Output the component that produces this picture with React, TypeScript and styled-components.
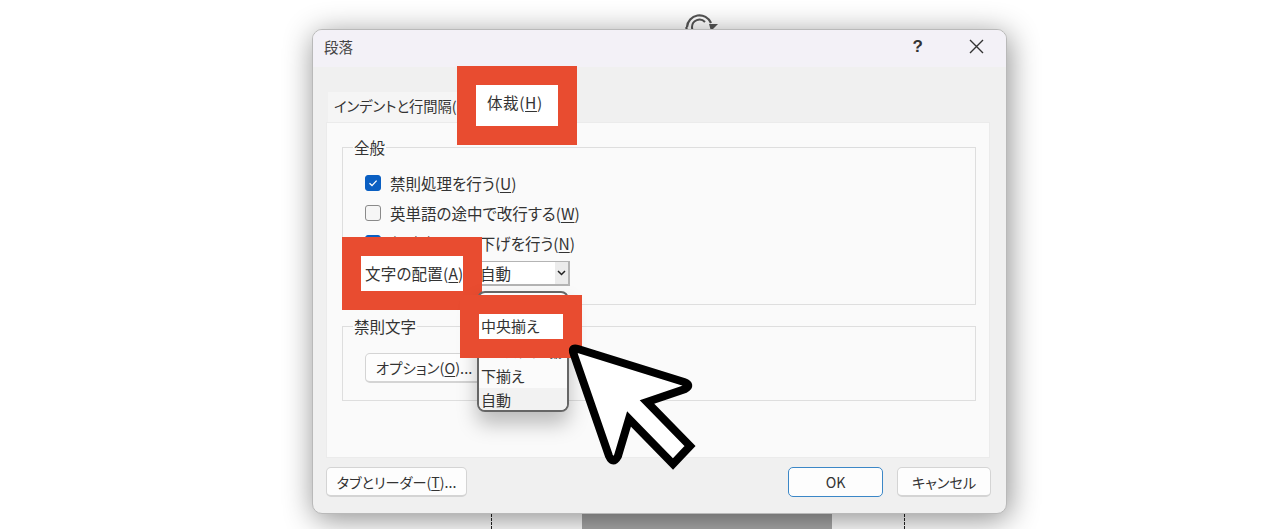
import React from "react";
import styled, { createGlobalStyle } from "styled-components";

const GlobalStyle = createGlobalStyle`
	html, body {
		margin: 0;
		padding: 0;
		background: #ffffff;
	}
	body {
		font-family: "Noto Sans CJK JP", "Noto Sans", sans-serif;
		font-feature-settings: "palt";
		font-size: 15.5px;
		color: #333333;
	}
`;

const Page = styled.div`
	position: relative;
	width: 1280px;
	height: 529px;
	overflow: hidden;
	display: flex;
	flex-direction: column;
`;

const TopStrip = styled.div`
	height: 29px;
	padding: 12px 0 0 684px;
	box-sizing: border-box;
	overflow: hidden;
`;

const Dialog = styled.div`
	position: relative;
	z-index: 1;
	width: 695px;
	height: 485px;
	margin-left: 312px;
	box-sizing: border-box;
	flex: none;
	display: flex;
	flex-direction: column;
	background: #f0f0f0;
	border: 1px solid #b9b9b9;
	border-radius: 10px;
	box-shadow: 2px 5px 30px rgba(0, 0, 0, 0.45);
`;

const TitleBar = styled.div`
	height: 37px;
	flex: none;
	box-sizing: border-box;
	display: flex;
	align-items: center;
	padding: 0 22px 4px 11px;
	background: #f3f1f7;
	border-radius: 9px 9px 0 0;
`;

const Title = styled.span`
	font-size: 14.5px;
	color: #444444;
	flex: 1;
`;

const HelpMark = styled.span`
	font-family: "Liberation Sans", sans-serif;
	font-weight: 700;
	font-size: 17px;
	color: #333333;
	margin-right: 46px;
`;

const Tabs = styled.div`
	height: 30px;
	margin: 25px 0 0 15px;
	display: flex;
	flex: none;
`;

const Tab = styled.div`
	width: 148px;
	height: 30px;
	box-sizing: border-box;
	padding: 0 0 0 6px;
	background: #f5f5f5;
	line-height: 27px;
	font-size: 14.3px;
	white-space: nowrap;
	overflow: hidden;
`;

const ActiveTab = styled.div`
	position: relative;
	z-index: 5;
	width: 82px;
	height: 41px;
	margin-top: -7px;
	box-sizing: border-box;
	padding: 4px 0 0 11px;
	line-height: 26px;
	letter-spacing: 0.6px;
	background: #ffffff;
	outline: 19px solid #e84c30;
	white-space: nowrap;
`;

const Panel = styled.div`
	height: 336px;
	margin: 0 16px 0 13px;
	flex: none;
	box-sizing: border-box;
	padding: 13px 13px 0 15px;
	background: #fafafa;
	border: 1px solid #ebebeb;
`;

const Group = styled.fieldset<{ $height: number; $gap: number; $top?: number }>`
	height: ${(p) => p.$height}px;
	margin: 0 0 ${(p) => p.$gap}px;
	padding: ${(p) => p.$top ?? 0}px 0 0 22px;
	box-sizing: border-box;
	border: 1px solid #dedede;
	min-width: 0;
`;

const GroupTitle = styled.legend`
	margin-left: -12px;
	padding: 0 1px;
	line-height: 22px;
`;

const CheckRow = styled.div`
	height: 30px;
	display: flex;
	align-items: center;
	gap: 9px;
	white-space: nowrap;
`;

const CheckBox = styled.span<{ $checked?: boolean }>`
	width: 16px;
	height: 16px;
	box-sizing: border-box;
	flex: none;
	display: flex;
	align-items: center;
	justify-content: center;
	border-radius: 3px;
	border: 1px solid ${(p) => (p.$checked ? "#0a5fc2" : "#8a8a8a")};
	background: ${(p) => (p.$checked ? "#0a5fc2" : "#f6f6f6")};
`;

const Key = styled.span`
	text-decoration: underline;
	text-underline-offset: 2px;
	text-decoration-thickness: 1px;
`;

const AlignRow = styled.div`
	height: 30px;
	display: flex;
	align-items: center;
	gap: 16px;
	margin-left: -4px;
`;

const AlignLabel = styled.div`
	position: relative;
	z-index: 3;
	width: 102px;
	height: 35px;
	flex: none;
	box-sizing: border-box;
	padding-left: 4px;
	line-height: 35px;
	letter-spacing: 0.2px;
	background: #ffffff;
	outline: 19px solid #e84c30;
	white-space: nowrap;
`;

const Select = styled.div`
	position: relative;
	width: 91px;
	height: 25px;
	box-sizing: border-box;
	display: flex;
	background: #ffffff;
	border: 1px solid #b4b4b4;
	border-width: 1px 2px 2px 1px;
`;

const SelectValue = styled.span`
	flex: 1;
	line-height: 22px;
`;

const SelectArrow = styled.span`
	width: 13px;
	display: flex;
	align-items: center;
	justify-content: center;
	background: #ececec;
`;

const DropDown = styled.div`
	position: absolute;
	z-index: 4;
	top: 29px;
	left: -3px;
	width: 92px;
	height: 121px;
	box-sizing: border-box;
	background: #fbfbfb;
	border: 2px solid #666666;
	border-radius: 8px;
	box-shadow: 0 12px 20px rgba(0, 0, 0, 0.25);
`;

const Option = styled.div<{ $dim?: boolean }>`
	height: 24.5px;
	box-sizing: border-box;
	line-height: 24px;
	padding-left: 2px;
	background: ${(p) => (p.$dim ? "#f2f2f2" : "transparent")};
	white-space: nowrap;
	font-size: 15px;
	&:first-child {
		margin-top: -3px;
	}
	&:last-child {
		height: 21.5px;
		border-radius: 0 0 6px 6px;
	}
`;

const PickedOption = styled(Option)`
	position: relative;
	z-index: 1;
	width: 84px;
	height: 25px;
	background: #ffffff;
	outline: 19px solid #e84c30;
`;

const LongOption = styled(Option)`
	font-size: 12.5px;
	line-height: 28px;
`;

const Button = styled.button<{ $width: number; $primary?: boolean }>`
	width: ${(p) => p.$width}px;
	height: 30px;
	padding: 0;
	flex: none;
	font-family: inherit;
	font-feature-settings: inherit;
	font-size: 14.2px;
	color: #333333;
	background: #fdfdfd;
	border: 1px solid ${(p) => (p.$primary ? "#3b87c7" : "#d4d4d4")};
	border-width: ${(p) => (p.$primary ? "1.5px" : "1px 1px 2px 1px")};
	border-radius: 5px;
	white-space: nowrap;
`;

const Footer = styled.div`
	display: flex;
	margin: 9px 0 0 13px;
	padding-right: 15px;
	gap: 14px;
`;

const FooterGap = styled.div`
	flex: 1;
`;

const OptionButton = styled(Button)`
	margin-top: 16px;
	display: block;
	font-size: 14.5px;
`;

const BottomStrip = styled.div`
	height: 15px;
	flex: none;
	display: flex;
	background: #ffffff;
`;

const DashLine = styled.div<{ $left: number }>`
	margin-left: ${(p) => p.$left}px;
	width: 0;
	border-left: 1px dashed #222222;
`;

const DarkBlock = styled.div`
	margin-left: 90px;
	width: 250px;
	background: #a8a8a8;
`;

const Pointer = styled.svg`
	position: absolute;
	z-index: 6;
	left: 560px;
	top: 335px;
`;

function Check() {
	return (
		<svg width="12" height="12" viewBox="0 0 12 12" fill="none">
			<path d="M2.5 6.3 L5 8.6 L9.6 3.6" stroke="#ffffff" strokeWidth="1.3" />
		</svg>
	);
}

function RotateMark() {
	return (
		<svg width="36" height="34" viewBox="0 0 36 34" fill="none" stroke="#555555">
			<path d="M3 15 A12.5 12.5 0 0 1 27 11" strokeWidth="2.2" />
			<path d="M2.5 15 A12.5 12.5 0 0 0 20 27" strokeWidth="2.2" />
			<path d="M8 15 A7.5 7.5 0 0 1 21 10" strokeWidth="2" />
			<path d="M8 15 A7.5 7.5 0 0 0 20 21" strokeWidth="2" />
			<path d="M25 12 L34 12 L27 19 Z" fill="#555555" stroke="none" />
		</svg>
	);
}

export default function App() {
	return (
		<Page>
			<GlobalStyle />
			<TopStrip>
				<RotateMark />
			</TopStrip>
			<Dialog>
				<TitleBar>
					<Title>段落</Title>
					<HelpMark>?</HelpMark>
					<svg width="15" height="15" viewBox="0 0 15 15" stroke="#333333" strokeWidth="1.4" fill="none">
						<path d="M1 1 L14 14 M14 1 L1 14" />
					</svg>
				</TitleBar>
				<Tabs>
					<Tab>インデントと行間隔(I)</Tab>
					<ActiveTab>
						体裁(<Key>H</Key>)
					</ActiveTab>
				</Tabs>
				<Panel>
					<Group $height={169} $gap={10} $top={10}>
						<GroupTitle>全般</GroupTitle>
						<CheckRow>
							<CheckBox $checked>
								<Check />
							</CheckBox>
							<span>
								禁則処理を行う(<Key>U</Key>)
							</span>
						</CheckRow>
						<CheckRow>
							<CheckBox />
							<span>
								英単語の途中で改行する(<Key>W</Key>)
							</span>
						</CheckRow>
						<CheckRow>
							<CheckBox $checked>
								<Check />
							</CheckBox>
							<span>
								句読点のぶら下げを行う(<Key>N</Key>)
							</span>
						</CheckRow>
						<AlignRow>
							<AlignLabel>
								文字の配置(<Key>A</Key>)
							</AlignLabel>
							<Select>
								<SelectValue>自動</SelectValue>
								<SelectArrow>
									<svg width="9" height="6" viewBox="0 0 9 6" fill="none" stroke="#222222" strokeWidth="1.5">
										<path d="M1 1 L4.5 4.5 L8 1" />
									</svg>
								</SelectArrow>
								<DropDown>
									<Option>上揃え</Option>
									<PickedOption>中央揃え</PickedOption>
									<LongOption>ベースライン揃え</LongOption>
									<Option>下揃え</Option>
									<Option $dim>自動</Option>
								</DropDown>
							</Select>
						</AlignRow>
					</Group>
					<Group $height={86} $gap={0}>
						<GroupTitle>禁則文字</GroupTitle>
						<OptionButton $width={118}>
							オプション(<Key>O</Key>)...
						</OptionButton>
					</Group>
				</Panel>
				<Footer>
					<Button $width={141}>
						タブとリーダー(<Key>T</Key>)...
					</Button>
					<FooterGap />
					<Button $width={95} $primary>
						OK
					</Button>
					<Button $width={94}>キャンセル</Button>
				</Footer>
			</Dialog>
			<BottomStrip>
				<DashLine $left={491} />
				<DarkBlock />
				<DashLine $left={72} />
			</BottomStrip>
			<Pointer width="140" height="140" viewBox="560 335 140 140">
				<path
					d="M573 352 Q572 347 578 349 L684 382 Q692 385 685 389 L647 402 L690 446 L673 464 L629 419 L618 456 Q613 465 609 456 Z"
					fill="#ffffff"
					stroke="#000000"
					strokeWidth="8"
				/>
			</Pointer>
		</Page>
	);
}
